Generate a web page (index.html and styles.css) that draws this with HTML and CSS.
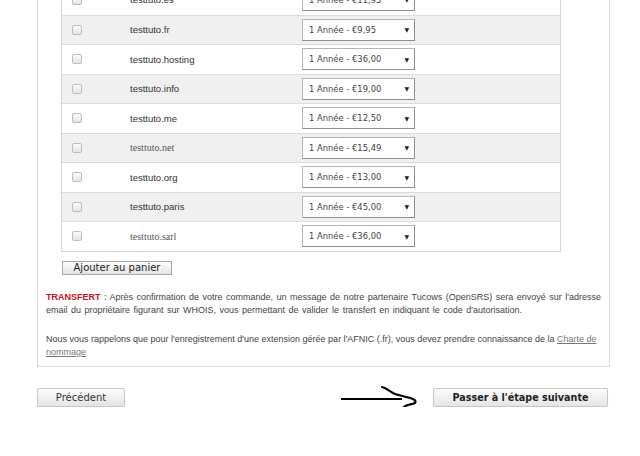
FILE: index.html
```html
<!DOCTYPE html>
<html lang="fr">
<head>
<meta charset="utf-8">
<title>Choix des extensions</title>
<link rel="stylesheet" href="styles.css">
</head>
<body>
<div class="page">
  <div class="panel">
    <div class="domains">
      <div class="row"><span class="cbcell"><input type="checkbox" class="cb"></span><span class="dom">testtuto.es</span><span class="sel"><span>1 Année - €11,95</span><span class="arr">▼</span></span></div>
      <div class="row alt"><span class="cbcell"><input type="checkbox" class="cb"></span><span class="dom">testtuto.fr</span><span class="sel"><span>1 Année - €9,95</span><span class="arr">▼</span></span></div>
      <div class="row"><span class="cbcell"><input type="checkbox" class="cb"></span><span class="dom">testtuto.hosting</span><span class="sel"><span>1 Année - €36,00</span><span class="arr">▼</span></span></div>
      <div class="row alt"><span class="cbcell"><input type="checkbox" class="cb"></span><span class="dom">testtuto.info</span><span class="sel"><span>1 Année - €19,00</span><span class="arr">▼</span></span></div>
      <div class="row"><span class="cbcell"><input type="checkbox" class="cb"></span><span class="dom">testtuto.me</span><span class="sel"><span>1 Année - €12,50</span><span class="arr">▼</span></span></div>
      <div class="row alt"><span class="cbcell"><input type="checkbox" class="cb"></span><span class="dom dom-serif">testtuto.net</span><span class="sel"><span>1 Année - €15,49</span><span class="arr">▼</span></span></div>
      <div class="row"><span class="cbcell"><input type="checkbox" class="cb"></span><span class="dom">testtuto.org</span><span class="sel"><span>1 Année - €13,00</span><span class="arr">▼</span></span></div>
      <div class="row alt"><span class="cbcell"><input type="checkbox" class="cb"></span><span class="dom">testtuto.paris</span><span class="sel"><span>1 Année - €45,00</span><span class="arr">▼</span></span></div>
      <div class="row"><span class="cbcell"><input type="checkbox" class="cb"></span><span class="dom dom-serif">testtuto.sarl</span><span class="sel"><span>1 Année - €36,00</span><span class="arr">▼</span></span></div>
    </div>
    <button class="add" type="button">Ajouter au panier</button>
    <p class="note first"><span class="red">TRANSFERT</span> : Après confirmation de votre commande, un message de notre partenaire Tucows (OpenSRS) sera envoyé sur l'adresse email du propriétaire figurant sur WHOIS, vous permettant de valider le transfert en indiquant le code d'autorisation.</p>
    <p class="note second">Nous vous rappelons que pour l'enregistrement d'une extension gérée par l'AFNIC (.fr), vous devez prendre connaissance de la <a href="#" class="link">Charte de nommage</a></p>
  </div>
  <div class="footer">
    <button class="btn" type="button">Précédent</button>
    <svg class="arrow" width="80" height="36" viewBox="0 0 80 36" aria-hidden="true">
      <path d="M1 14 L62 14" fill="none" stroke="#000" stroke-width="2"/>
      <path d="M42 2 C47 3 50 7 55 9 L66 12 C72 13 77 15 75 18 C71 20 66 19 63 23 C60 27 56 28 53 32" fill="none" stroke="#000" stroke-width="2.2" stroke-linecap="round" stroke-linejoin="round"/>
    </svg>
    <button class="btn next" type="button">Passer à l'étape suivante</button>
  </div>
</div>
</body>
</html>
```
FILE: styles.css
```css
html, body {
  margin: 0;
  padding: 0;
  background: #fff;
}
body {
  font-family: "Liberation Sans", Arial, sans-serif;
  color: #444;
  overflow: hidden;
}
.page {
  width: 573px;
  margin: -16px 0 0 37px;
}
.panel {
  border: 1px solid #d9d9d9;
  border-top: none;
  padding: 0 5px 7px 0;
}
.domains {
  box-sizing: border-box;
  width: 500px;
  margin-left: 23px;
  border: 1px solid #d6d6d6;
}
.row {
  box-sizing: border-box;
  display: grid;
  grid-template-columns: 30px 210px 1fr;
  align-items: center;
  height: 29.5px;
  border-top: 1px solid #dcdcdc;
  background: #fff;
}
.row:first-child {
  border-top: none;
}
.row.alt {
  background: #f0f0f0;
}
.cbcell {
  display: flex;
  justify-content: center;
}
.cb {
  appearance: none;
  -webkit-appearance: none;
  margin: 0;
  width: 10px;
  height: 10px;
  border: 1px solid #bdbdbd;
  border-radius: 2px;
  background: linear-gradient(#fbfbfb, #e4e4e4);
  box-sizing: border-box;
}
.dom {
  padding-left: 38px;
  font-size: 9.5px;
  color: #333;
}
.dom-serif {
  font-family: "Liberation Serif", "Times New Roman", serif;
  font-size: 10px;
  color: #555;
}
.sel {
  box-sizing: border-box;
  width: 113px;
  height: 22px;
  display: flex;
  align-items: center;
  justify-content: space-between;
  padding: 0 5px 0 6px;
  background: #fff;
  border: 1px solid #b5b5b5;
  border-right-color: #8e8e8e;
  border-bottom-color: #8e8e8e;
  font-family: "DejaVu Sans", Verdana, sans-serif;
  font-size: 8.4px;
  color: #444;
}
.arr {
  font-size: 6px;
  color: #222;
}
.add {
  display: block;
  box-sizing: border-box;
  margin: 9px 0 0 24px;
  width: 110px;
  height: 14px;
  padding: 0;
  border: 1px solid #a8a8a8;
  border-radius: 0;
  background: linear-gradient(#ffffff, #e2e2e2);
  font-family: "DejaVu Sans", Verdana, sans-serif;
  font-size: 10px;
  line-height: 12px;
  color: #222;
}
.note {
  margin: 16px 0 0 8px;
  font-size: 9px;
  line-height: 13px;
  color: #444;
}
.note.first {
  word-spacing: 1px;
}
.note.second {
  margin-top: 16px;
}
.red {
  color: #d0101c;
  font-weight: bold;
}
.link {
  color: #777;
  text-decoration: underline;
}
.footer {
  position: relative;
  display: flex;
  justify-content: space-between;
  padding-right: 2px;
  margin-top: 21px;
}
.btn {
  box-sizing: border-box;
  width: 88px;
  height: 19px;
  padding: 0;
  border: 1px solid #c6c6c6;
  border-radius: 2px;
  background: linear-gradient(#fdfdfd, #e4e4e4);
  box-shadow: 0 1px 1px rgba(0, 0, 0, 0.12);
  font-family: "DejaVu Sans", Verdana, sans-serif;
  font-size: 10px;
  color: #333;
}
.btn.next {
  width: 175px;
  font-weight: bold;
  font-size: 9.6px;
  color: #222;
}
.arrow {
  position: absolute;
  left: 303px;
  top: -3px;
}
```
